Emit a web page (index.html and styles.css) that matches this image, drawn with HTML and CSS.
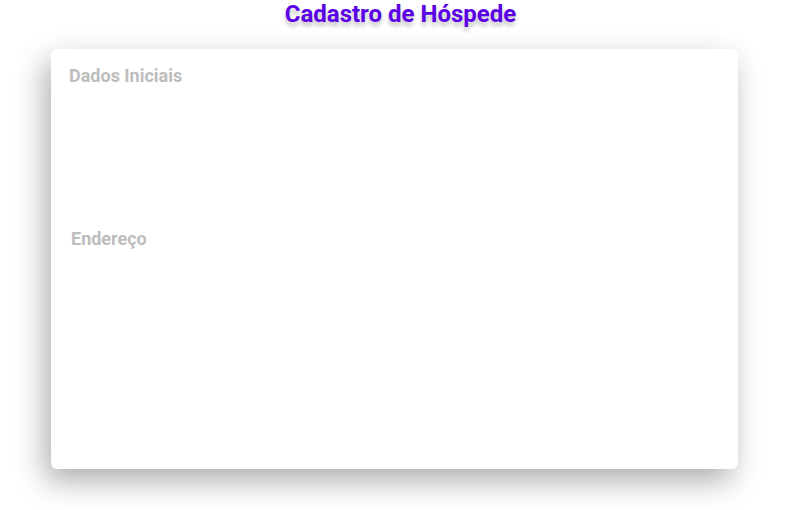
FILE: index.html
```html
<!DOCTYPE html>
<html lang="pt">
<head>
<meta charset="utf-8">
<link rel="stylesheet" href="styles.css">
</head>
<body>
  <h1 class="title">Cadastro de Hóspede</h1>
  <div class="card">
    <section class="section section-initial">
      <h2 class="section-title">Dados Iniciais</h2>
    </section>
    <section class="section section-address">
      <h2 class="section-title">Endereço</h2>
    </section>
  </div>
</body>
</html>
```

FILE: styles.css
```css
html, body {
  margin: 0;
  padding: 0;
  background: #ffffff;
  font-family: Roboto, "Liberation Sans", sans-serif;
}

body {
  min-height: 510px;
  box-sizing: border-box;
  padding-bottom: 41px;
}

.title {
  margin: 0;
  padding-top: 0;
  height: 49px;
  box-sizing: border-box;
  text-align: center;
  font-size: 24px;
  line-height: 28px;
  font-weight: 700;
  color: #5b00e6;
  text-shadow: 0 4px 4px rgba(0, 0, 0, 0.25);
}

.card {
  margin-left: 51px;
  width: 687px;
  height: 420px;
  background: #ffffff;
  border-radius: 6px;
  box-shadow: -6px 12px 30px rgba(0, 0, 0, 0.32);
  box-sizing: border-box;
  padding: 15px 18px;
}

.section-title {
  margin: 0;
  font-size: 18px;
  line-height: 24px;
  font-weight: 700;
  color: #bdbdbd;
}

.section-initial {
  height: 163px;
}

.section-address {
  padding-left: 2px;
}
```
